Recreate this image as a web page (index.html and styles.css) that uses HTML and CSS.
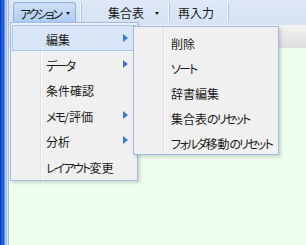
FILE: index.html
```html
<!DOCTYPE html>
<html lang="ja">
<head>
  <meta charset="UTF-8" />
  <title>アクション</title>
  <link rel="stylesheet" href="styles.css">
</head>
<body>
  <div class="window">
    <div class="frame"></div>
    <div class="main">
      <div class="toolbar">
        <div class="tool active"><span class="kana tight">アクション</span><i class="caret"></i></div>
        <div class="sep"></div>
        <div class="tool wide">集合表<i class="caret"></i></div>
        <div class="sep"></div>
        <div class="tool plain">再入力</div>
        <div class="sep"></div>
      </div>
      <div class="header"></div>
      <div class="content"></div>
    </div>

    <!-- dropdown -->
    <ul class="menu menu-main">
      <li class="item hover"><span>編集</span><i class="arrow"></i></li>
      <li class="item"><span><span class="kana">データ</span></span><i class="arrow"></i></li>
      <li class="item"><span>条件確認</span></li>
      <li class="item"><span><span class="kana">メモ</span>/評価</span><i class="arrow"></i></li>
      <li class="item"><span>分析</span><i class="arrow"></i></li>
      <li class="item"><span><span class="kana">レイアウト</span>変更</span></li>
    </ul>

    <ul class="menu menu-sub">
      <li class="item"><span>削除</span></li>
      <li class="item"><span><span class="kana">ソート</span></span></li>
      <li class="item"><span>辞書編集</span></li>
      <li class="item"><span>集合表<span class="kana">のリセット</span></span></li>
      <li class="item"><span><span class="kana">フォルダ</span>移動<span class="kana">のリセット</span></span></li>
    </ul>
  </div>
</body>
</html>
```

FILE: styles.css
```css
body {
  margin: 0;
  font-family: "Noto Sans CJK JP", "Noto Sans", sans-serif;
  font-size: 12px;
  color: #1a1a1a;
  font-feature-settings: "palt";
}
.kana {
  letter-spacing: -1.8px;
}
.kana.tight {
  letter-spacing: -2.3px;
}
.window {
  position: relative;
  display: flex;
  width: 306px;
  height: 245px;
  overflow: hidden;
}
.frame {
  width: 9px;
  background: linear-gradient(to right, #0b3bb0 0, #0b3bb0 1px, #1a5fe6 1px, #1a5fe6 4px, #5e8fe6 4px, #5e8fe6 5px, #b7c7e0 5px, #b7c7e0 7px, #dce5f1 7px, #dce5f1 8px, #a3bde8 8px);
}
.main {
  flex: 1;
  display: flex;
  flex-direction: column;
}
.toolbar {
  height: 25px;
  display: flex;
  align-items: flex-start;
  background: linear-gradient(#dfe9f6, #d6e3f3);
}
.tool {
  display: flex;
  align-items: center;
  height: 21px;
  margin-top: 2px;
  box-sizing: border-box;
  white-space: nowrap;
}
.tool.active {
  margin-left: 4px;
  width: 63px;
  height: 23px;
  padding: 0 0 2px 6px;
  border: 1px solid #8eb0de;
  border-bottom: none;
  border-radius: 3px 3px 0 0;
  background: linear-gradient(#cfe0f6, #a8c8f0);
}
.tool.wide {
  width: 82px;
  padding-left: 26px;
}
.tool.plain {
  width: 53px;
  padding-left: 8px;
}
.caret {
  width: 0;
  height: 0;
  margin-left: 5px;
  margin-top: 1px;
  border-top: 3px solid #1a1a1a;
  border-left: 2.5px solid transparent;
  border-right: 2.5px solid transparent;
}
.tool.wide .caret {
  margin-left: 11px;
}
.sep {
  width: 1px;
  height: 19px;
  margin: 3px 0 0 4px;
  background: #a9c8f0;
  border-left: 1px solid #f4f8fd;
}
.header {
  height: 23px;
  background: linear-gradient(#f3f3f3, #dedede);
}
.content {
  flex: 1;
  background: #edfeec;
}

/* menus */
.menu {
  position: absolute;
  margin: 0;
  padding: 2px 1px;
  list-style: none;
  border: 1px solid #9fbbe8;
  background: linear-gradient(to right, #f0f0f0 29px, #e0e0e0 29px, #e0e0e0 30px, #fbfbfb 30px, #fbfbfb 31px, #f0f0f0 31px);
  box-shadow: 2px 2px 3px rgba(0, 0, 0, 0.15);
}
.menu-main {
  left: 10px;
  top: 22px;
  width: 124px;
}
.menu-sub {
  left: 133px;
  top: 26px;
  width: 142px;
  padding-bottom: 1px;
}
.item {
  display: flex;
  align-items: center;
  height: 25.5px;
  box-sizing: border-box;
  padding: 0 7px 0 33px;
  border: 1px solid transparent;
}
.menu-sub .item {
  height: 24.9px;
  padding-left: 35px;
}
.item > span {
  flex: 1;
  padding-top: 5px;
  line-height: 18px;
  white-space: nowrap;
}
.item.hover {
  background: #d9e6f8;
  border-color: #aac5ee;
}
.arrow {
  width: 0;
  height: 0;
  margin-top: 1px;
  border-top: 4.5px solid transparent;
  border-bottom: 4.5px solid transparent;
  border-left: 5px solid #3a7ad6;
}
```
